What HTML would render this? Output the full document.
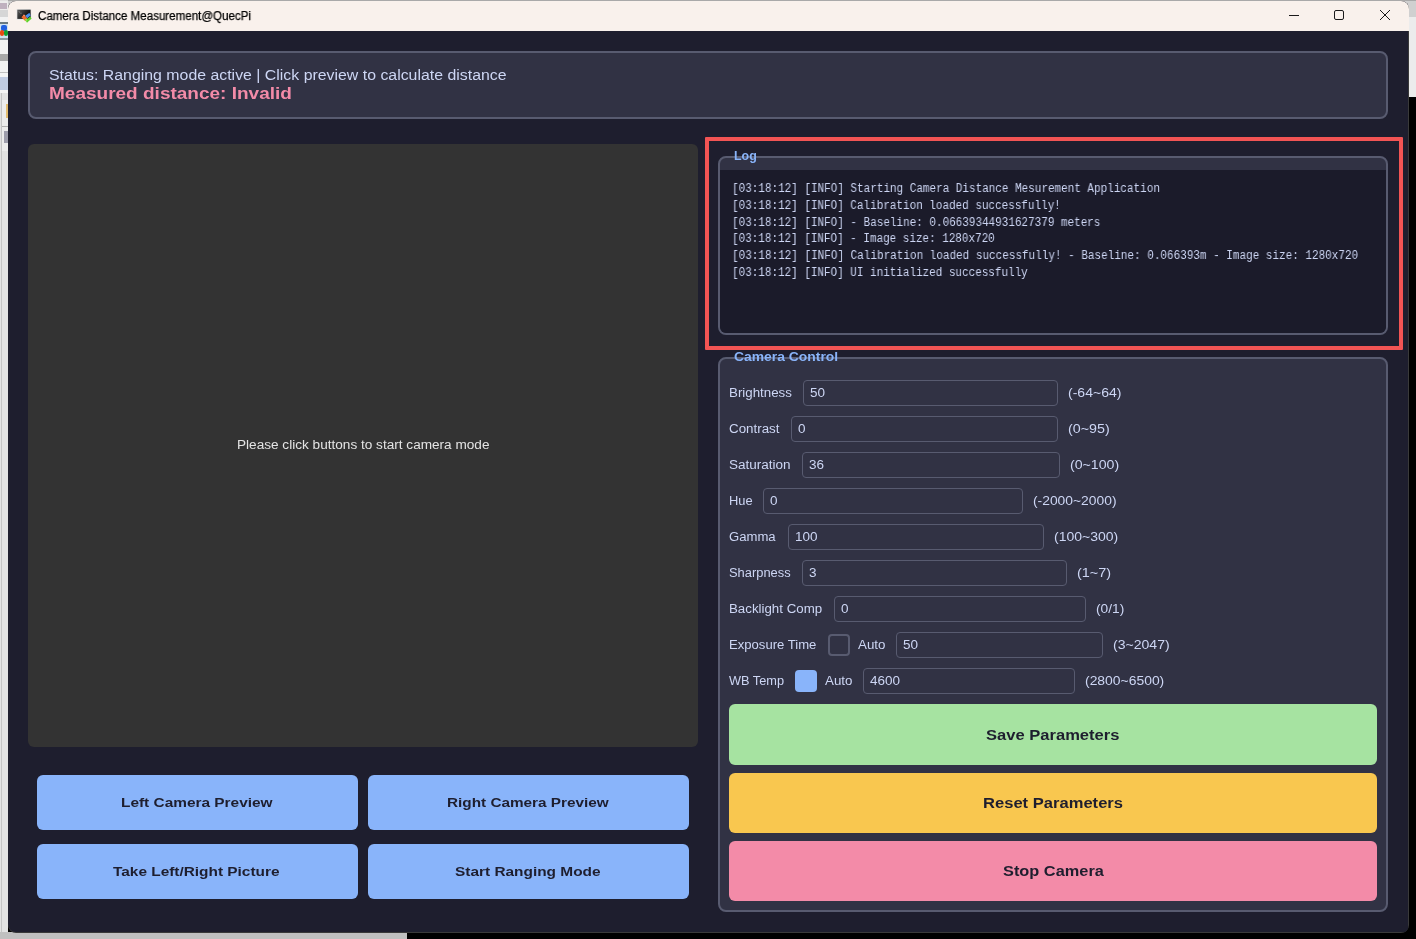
<!DOCTYPE html>
<html><head><meta charset="utf-8">
<style>
*{margin:0;padding:0;box-sizing:border-box}
html,body{width:1416px;height:939px;overflow:hidden;background:#000;font-family:"Liberation Sans",sans-serif}
.a{position:absolute}
.t{position:absolute;white-space:pre;line-height:1;transform-origin:0 0;will-change:transform}
.inp{position:absolute;border:1px solid #585b70;border-radius:4px;background:#313244}
</style></head><body>
<!-- background desktop -->
<div class="a" style="left:0;top:0;width:1416px;height:17px;background:#d0d0d0"></div>
<div class="a" style="left:0;top:0;width:1416px;height:1px;background:#a9a9a9"></div>
<div class="a" style="left:0;top:0;width:8px;height:932px;background:#dedede"></div>
<div class="a" style="left:0;top:1px;width:8px;height:9px;background:#ececec"></div>
<div class="a" style="left:0;top:3px;width:7px;height:6px;background:#8a6a8a;opacity:.45"></div>
<div class="a" style="left:0;top:10px;width:8px;height:7px;background:#d6d6d6"></div>
<div class="a" style="left:0;top:17px;width:8px;height:5px;background:#f2f2f2"></div>
<div class="a" style="left:0;top:22px;width:8px;height:2px;background:#6a7a80"></div>
<div class="a" style="left:0;top:24px;width:8px;height:14px;background:#cfe3f0"></div>
<div class="a" style="left:1px;top:25px;width:6px;height:6px;border-radius:2px;background:#2060e0"></div>
<div class="a" style="left:0;top:30px;width:4px;height:6px;border-radius:2px;background:#e84a10"></div>
<div class="a" style="left:4px;top:30px;width:4px;height:6px;border-radius:2px;background:#10a030"></div>
<div class="a" style="left:0;top:38px;width:8px;height:2px;background:#8a9aa0"></div>
<div class="a" style="left:0;top:40px;width:8px;height:32px;background:#f2f2f2"></div>
<div class="a" style="left:0;top:54px;width:8px;height:7px;background:#202020;opacity:.35"></div>
<div class="a" style="left:0;top:72px;width:8px;height:1px;background:#c0c0c0"></div>
<div class="a" style="left:0;top:73px;width:8px;height:20px;background:#f4f4f4"></div>
<div class="a" style="left:0;top:77px;width:8px;height:13px;background:#6080c0;opacity:.35"></div>
<div class="a" style="left:0;top:93px;width:8px;height:839px;background:#e2e2e2"></div>
<div class="a" style="left:1px;top:93px;width:1px;height:839px;background:#c4c4c4"></div>
<div class="a" style="left:2px;top:100px;width:6px;height:26px;background:#ececec"></div>
<div class="a" style="left:6px;top:104px;width:2px;height:14px;background:#e0a020;opacity:.6"></div>
<div class="a" style="left:2px;top:126px;width:6px;height:1px;background:#b0b0b0"></div>
<div class="a" style="left:2px;top:127px;width:6px;height:24px;background:#ececec"></div>
<div class="a" style="left:4px;top:131px;width:4px;height:12px;background:#404060;opacity:.45"></div>
<div class="a" style="left:0;top:932px;width:407px;height:7px;background:#c0c0c0"></div>
<div class="a" style="left:1408px;top:17px;width:8px;height:80px;background:#ececec"></div>
<div class="a" style="left:1408px;top:97px;width:8px;height:842px;background:#000"></div>
<div class="a" style="left:407px;top:932px;width:1009px;height:7px;background:#000"></div>
<!-- window -->
<div class="a" style="left:8px;top:1px;width:1401px;height:932px;border-radius:8px;background:#3a3a3a;overflow:hidden">
  <div class="a" style="left:0;top:0;width:1400px;height:931px;border-radius:0 0 0 8px;background:#1e1e2e"></div>
  <div class="a" style="left:0;top:0;width:1401px;height:30px;background:#f9f1ec"></div>
</div>
<!-- app icon -->
<svg class="a" style="left:0;top:0" width="40" height="30" viewBox="0 0 40 30">
  <defs><linearGradient id="scr" x1="0" y1="0" x2="1" y2="0.6"><stop offset="0" stop-color="#5a5a5a"/><stop offset="0.55" stop-color="#2a2a2a"/><stop offset="1" stop-color="#000"/></linearGradient></defs>
  <rect x="16.6" y="9" width="14.6" height="10.8" fill="#e4e4e4"/>
  <rect x="17.3" y="9.7" width="13.3" height="9.2" fill="url(#scr)"/>
  <path d="M18.6 11.3 L20 12.4 M20.3 13.2 L21.6 13.2" stroke="#9a9a9a" stroke-width="0.7"/>
  <path d="M21.4 17.2 L24 14.6 L27.6 18.4 L25.4 21.2 Z" fill="#ee6a2a"/>
  <path d="M23 15.3 L24 14.4 L25.2 15.6 L24.2 16.6 Z" fill="#f59070"/>
  <path d="M25.2 15.8 L29.4 12.8 L30.6 15.4 L27.4 18.2 Z" fill="#4a8ee8"/>
  <path d="M25.6 20.4 L30.2 16.4 L31.6 18.6 L27 22.8 Z" fill="#5ad22a"/>
  <path d="M24.6 19.6 L26.2 18.6 L27.4 20.6 L26.2 21.8 Z" fill="#8ae04a"/>
</svg>
<!-- window controls -->
<div class="a" style="left:1289px;top:15px;width:10px;height:1px;background:#1a1a1a"></div>
<div class="a" style="left:1334px;top:10px;width:10px;height:10px;border:1px solid #1a1a1a;border-radius:2px"></div>
<svg class="a" style="left:1380px;top:10px" width="10" height="10" viewBox="0 0 10 10"><path d="M0 0L10 10M10 0L0 10" stroke="#1a1a1a" stroke-width="1"/></svg>

<!-- status box -->
<div class="a" style="left:28px;top:51px;width:1360px;height:68px;border:2px solid #585b70;border-radius:8px;background:#313244"></div>
<!-- preview -->
<div class="a" style="left:28px;top:144px;width:670px;height:603px;border-radius:6px;background:#333333"></div>
<!-- left buttons -->
<div class="a" style="left:37px;top:775px;width:321px;height:55px;border-radius:6px;background:#89b4fa"></div>
<div class="a" style="left:368px;top:775px;width:321px;height:55px;border-radius:6px;background:#89b4fa"></div>
<div class="a" style="left:37px;top:844px;width:321px;height:55px;border-radius:6px;background:#89b4fa"></div>
<div class="a" style="left:368px;top:844px;width:321px;height:55px;border-radius:6px;background:#89b4fa"></div>
<!-- red highlight -->
<div class="a" style="left:705px;top:137px;width:698px;height:213px;border:4px solid #f25454;border-radius:1px"></div>
<!-- log group -->
<div class="a" style="left:718px;top:156px;width:670px;height:179px;border:2px solid #585b70;border-radius:8px;background:#313244;overflow:hidden">
  <div class="a" style="left:0;top:12px;width:666px;height:163px;background:#1b1b2a"></div>
</div>
<!-- camera control group -->
<div class="a" style="left:718px;top:357px;width:670px;height:555px;border:2px solid #585b70;border-radius:8px;background:#313244"></div>

<div class="a" style="left:732px;top:150px;width:26px;height:12px;background:transparent"></div>
<div class="inp" style="left:803px;top:380px;width:255px;height:26px"></div>
<div class="inp" style="left:791px;top:416px;width:267px;height:26px"></div>
<div class="inp" style="left:802px;top:452px;width:258px;height:26px"></div>
<div class="inp" style="left:763px;top:488px;width:259.5px;height:26px"></div>
<div class="inp" style="left:787.5px;top:524px;width:256.5px;height:26px"></div>
<div class="inp" style="left:802.3px;top:560px;width:264.70000000000005px;height:26px"></div>
<div class="inp" style="left:834.4px;top:596px;width:251.19999999999993px;height:26px"></div>
<div class="inp" style="left:896.3px;top:632px;width:206.5px;height:26px"></div>
<div class="inp" style="left:863.2px;top:668px;width:211.39999999999986px;height:26px"></div>
<!-- checkboxes -->
<div class="a" style="left:828px;top:634px;width:22px;height:22px;border:2px solid #585b70;border-radius:4px;background:#313244"></div>
<div class="a" style="left:795px;top:670px;width:22px;height:22px;border-radius:4px;background:#89b4fa"></div>
<!-- big buttons -->
<div class="a" style="left:729px;top:704px;width:648px;height:61px;border-radius:6px;background:#a6e3a1"></div>
<div class="a" style="left:729px;top:773px;width:648px;height:60px;border-radius:6px;background:#f9c74f"></div>
<div class="a" style="left:729px;top:841px;width:648px;height:60px;border-radius:6px;background:#f38ba8"></div>
<div class="t" style="left:38.20px;top:9.84px;font-size:12.00px;font-family:'Liberation Sans', sans-serif;font-weight:400;color:#000;transform:scaleX(0.9641);-webkit-text-stroke:0.25px #000;">Camera Distance Measurement@QuecPi</div>
<div class="t" style="left:49.00px;top:67.91px;font-size:14.28px;font-family:'Liberation Sans', sans-serif;font-weight:400;color:#cdd6f4;transform:scaleX(1.1125);">Status: Ranging mode active | Click preview to calculate distance</div>
<div class="t" style="left:49.00px;top:85.19px;font-size:16.32px;font-family:'Liberation Sans', sans-serif;font-weight:700;color:#f38ba8;transform:scaleX(1.1649);">Measured distance: Invalid</div>
<div class="t" style="left:236.70px;top:438.64px;font-size:12.24px;font-family:'Liberation Sans', sans-serif;font-weight:400;color:#e4e4e4;transform:scaleX(1.1117);">Please click buttons to start camera mode</div>
<div class="t" style="left:120.98px;top:795.58px;font-size:13.26px;font-family:'Liberation Sans', sans-serif;font-weight:700;color:#1e1e2e;transform:scaleX(1.1624);">Left Camera Preview</div>
<div class="t" style="left:446.87px;top:795.58px;font-size:13.26px;font-family:'Liberation Sans', sans-serif;font-weight:700;color:#1e1e2e;transform:scaleX(1.1559);">Right Camera Preview</div>
<div class="t" style="left:113.48px;top:864.58px;font-size:13.26px;font-family:'Liberation Sans', sans-serif;font-weight:700;color:#1e1e2e;transform:scaleX(1.1619);">Take Left/Right Picture</div>
<div class="t" style="left:454.98px;top:864.58px;font-size:13.26px;font-family:'Liberation Sans', sans-serif;font-weight:700;color:#1e1e2e;transform:scaleX(1.1630);">Start Ranging Mode</div>
<div class="t" style="left:733.80px;top:149.64px;font-size:12.24px;font-family:'Liberation Sans', sans-serif;font-weight:700;color:#89b4fa;transform:scaleX(1.0164);">Log</div>
<div class="t" style="left:733.80px;top:350.50px;font-size:12.40px;font-family:'Liberation Sans', sans-serif;font-weight:700;color:#89b4fa;transform:scaleX(1.1202);">Camera Control</div>
<div class="t" style="left:732.10px;top:183.11px;font-size:12.00px;font-family:'Liberation Mono', monospace;font-weight:400;color:#cdd6f4;transform:scaleX(0.9141);">[03:18:12] [INFO] Starting Camera Distance Mesurement Application</div>
<div class="t" style="left:732.10px;top:199.81px;font-size:12.00px;font-family:'Liberation Mono', monospace;font-weight:400;color:#cdd6f4;transform:scaleX(0.9132);">[03:18:12] [INFO] Calibration loaded successfully!</div>
<div class="t" style="left:732.10px;top:216.51px;font-size:12.00px;font-family:'Liberation Mono', monospace;font-weight:400;color:#cdd6f4;transform:scaleX(0.9136);">[03:18:12] [INFO] - Baseline: 0.06639344931627379 meters</div>
<div class="t" style="left:732.10px;top:233.21px;font-size:12.00px;font-family:'Liberation Mono', monospace;font-weight:400;color:#cdd6f4;transform:scaleX(0.9121);">[03:18:12] [INFO] - Image size: 1280x720</div>
<div class="t" style="left:732.10px;top:249.91px;font-size:12.00px;font-family:'Liberation Mono', monospace;font-weight:400;color:#cdd6f4;transform:scaleX(0.9152);">[03:18:12] [INFO] Calibration loaded successfully! - Baseline: 0.066393m - Image size: 1280x720</div>
<div class="t" style="left:732.10px;top:266.61px;font-size:12.00px;font-family:'Liberation Mono', monospace;font-weight:400;color:#cdd6f4;transform:scaleX(0.9127);">[03:18:12] [INFO] UI initialized successfully</div>
<div class="t" style="left:729.40px;top:386.54px;font-size:12.24px;font-family:'Liberation Sans', sans-serif;font-weight:400;color:#cdd6f4;transform:scaleX(1.0887);">Brightness</div>
<div class="t" style="left:810.00px;top:386.54px;font-size:12.24px;font-family:'Liberation Sans', sans-serif;font-weight:400;color:#cdd6f4;transform:scaleX(1.1047);">50</div>
<div class="t" style="left:1068.20px;top:386.54px;font-size:12.24px;font-family:'Liberation Sans', sans-serif;font-weight:400;color:#cdd6f4;transform:scaleX(1.1474);">(-64~64)</div>
<div class="t" style="left:729.40px;top:422.54px;font-size:12.24px;font-family:'Liberation Sans', sans-serif;font-weight:400;color:#cdd6f4;transform:scaleX(1.0918);">Contrast</div>
<div class="t" style="left:798.00px;top:422.54px;font-size:12.24px;font-family:'Liberation Sans', sans-serif;font-weight:400;color:#cdd6f4;transform:scaleX(1.1046);">0</div>
<div class="t" style="left:1068.20px;top:422.54px;font-size:12.24px;font-family:'Liberation Sans', sans-serif;font-weight:400;color:#cdd6f4;transform:scaleX(1.1670);">(0~95)</div>
<div class="t" style="left:729.40px;top:458.54px;font-size:12.24px;font-family:'Liberation Sans', sans-serif;font-weight:400;color:#cdd6f4;transform:scaleX(1.1043);">Saturation</div>
<div class="t" style="left:809.00px;top:458.54px;font-size:12.24px;font-family:'Liberation Sans', sans-serif;font-weight:400;color:#cdd6f4;transform:scaleX(1.1047);">36</div>
<div class="t" style="left:1070.20px;top:458.54px;font-size:12.24px;font-family:'Liberation Sans', sans-serif;font-weight:400;color:#cdd6f4;transform:scaleX(1.1570);">(0~100)</div>
<div class="t" style="left:729.40px;top:494.54px;font-size:12.24px;font-family:'Liberation Sans', sans-serif;font-weight:400;color:#cdd6f4;transform:scaleX(1.0534);">Hue</div>
<div class="t" style="left:770.00px;top:494.54px;font-size:12.24px;font-family:'Liberation Sans', sans-serif;font-weight:400;color:#cdd6f4;transform:scaleX(1.1046);">0</div>
<div class="t" style="left:1032.70px;top:494.54px;font-size:12.24px;font-family:'Liberation Sans', sans-serif;font-weight:400;color:#cdd6f4;transform:scaleX(1.1316);">(-2000~2000)</div>
<div class="t" style="left:729.40px;top:530.54px;font-size:12.24px;font-family:'Liberation Sans', sans-serif;font-weight:400;color:#cdd6f4;transform:scaleX(1.0723);">Gamma</div>
<div class="t" style="left:794.50px;top:530.54px;font-size:12.24px;font-family:'Liberation Sans', sans-serif;font-weight:400;color:#cdd6f4;transform:scaleX(1.1047);">100</div>
<div class="t" style="left:1053.70px;top:530.54px;font-size:12.24px;font-family:'Liberation Sans', sans-serif;font-weight:400;color:#cdd6f4;transform:scaleX(1.1443);">(100~300)</div>
<div class="t" style="left:729.40px;top:566.54px;font-size:12.24px;font-family:'Liberation Sans', sans-serif;font-weight:400;color:#cdd6f4;transform:scaleX(1.0541);">Sharpness</div>
<div class="t" style="left:809.30px;top:566.54px;font-size:12.24px;font-family:'Liberation Sans', sans-serif;font-weight:400;color:#cdd6f4;transform:scaleX(1.1046);">3</div>
<div class="t" style="left:1076.70px;top:566.54px;font-size:12.24px;font-family:'Liberation Sans', sans-serif;font-weight:400;color:#cdd6f4;transform:scaleX(1.1816);">(1~7)</div>
<div class="t" style="left:729.40px;top:602.54px;font-size:12.24px;font-family:'Liberation Sans', sans-serif;font-weight:400;color:#cdd6f4;transform:scaleX(1.0868);">Backlight Comp</div>
<div class="t" style="left:841.40px;top:602.54px;font-size:12.24px;font-family:'Liberation Sans', sans-serif;font-weight:400;color:#cdd6f4;transform:scaleX(1.1046);">0</div>
<div class="t" style="left:1095.80px;top:602.54px;font-size:12.24px;font-family:'Liberation Sans', sans-serif;font-weight:400;color:#cdd6f4;transform:scaleX(1.1223);">(0/1)</div>
<div class="t" style="left:729.40px;top:638.54px;font-size:12.24px;font-family:'Liberation Sans', sans-serif;font-weight:400;color:#cdd6f4;transform:scaleX(1.0707);">Exposure Time</div>
<div class="t" style="left:903.30px;top:638.54px;font-size:12.24px;font-family:'Liberation Sans', sans-serif;font-weight:400;color:#cdd6f4;transform:scaleX(1.1047);">50</div>
<div class="t" style="left:1112.60px;top:638.54px;font-size:12.24px;font-family:'Liberation Sans', sans-serif;font-weight:400;color:#cdd6f4;transform:scaleX(1.1498);">(3~2047)</div>
<div class="t" style="left:729.40px;top:674.54px;font-size:12.24px;font-family:'Liberation Sans', sans-serif;font-weight:400;color:#cdd6f4;transform:scaleX(1.0422);">WB Temp</div>
<div class="t" style="left:870.20px;top:674.54px;font-size:12.24px;font-family:'Liberation Sans', sans-serif;font-weight:400;color:#cdd6f4;transform:scaleX(1.1047);">4600</div>
<div class="t" style="left:1084.60px;top:674.54px;font-size:12.24px;font-family:'Liberation Sans', sans-serif;font-weight:400;color:#cdd6f4;transform:scaleX(1.1366);">(2800~6500)</div>
<div class="t" style="left:858.40px;top:638.54px;font-size:12.24px;font-family:'Liberation Sans', sans-serif;font-weight:400;color:#cdd6f4;transform:scaleX(1.0899);">Auto</div>
<div class="t" style="left:825.30px;top:674.54px;font-size:12.24px;font-family:'Liberation Sans', sans-serif;font-weight:400;color:#cdd6f4;transform:scaleX(1.0899);">Auto</div>
<div class="t" style="left:986.23px;top:727.91px;font-size:14.28px;font-family:'Liberation Sans', sans-serif;font-weight:700;color:#1e1e2e;transform:scaleX(1.1601);">Save Parameters</div>
<div class="t" style="left:982.92px;top:796.41px;font-size:14.28px;font-family:'Liberation Sans', sans-serif;font-weight:700;color:#1e1e2e;transform:scaleX(1.1616);">Reset Parameters</div>
<div class="t" style="left:1002.53px;top:864.41px;font-size:14.28px;font-family:'Liberation Sans', sans-serif;font-weight:700;color:#1e1e2e;transform:scaleX(1.1459);">Stop Camera</div>
</body></html>
